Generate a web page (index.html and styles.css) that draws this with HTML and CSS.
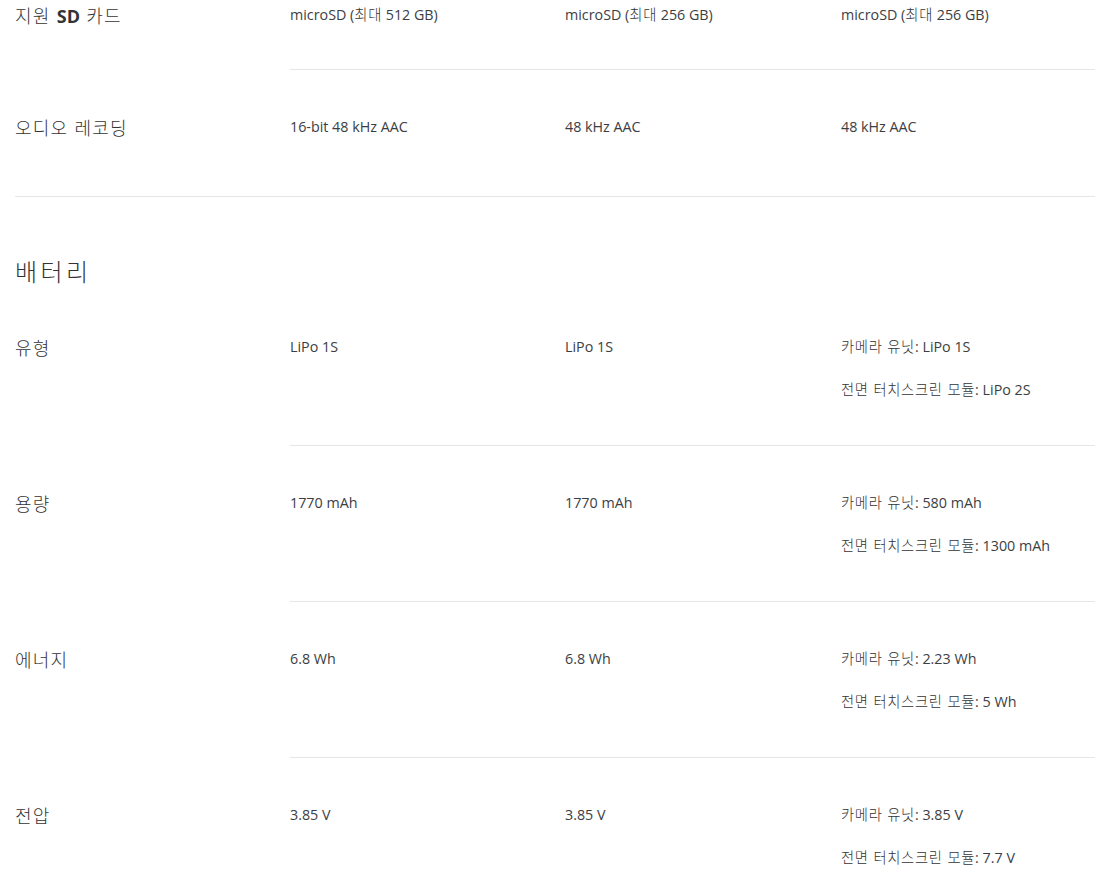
FILE: index.html
```html
<!DOCTYPE html>
<html lang="ko">
<head>
<meta charset="utf-8">
<title>사양</title>
<link rel="stylesheet" href="styles.css">
</head>
<body>
<div class="specs">
  <section class="group group-first">
    <div class="row row-first">
      <div class="label">지원 <b>SD</b> 카드</div>
      <div class="values">
        <div class="cell"><p>microSD (<span class="ko">최대</span> 512 GB)</p></div>
        <div class="cell"><p>microSD (<span class="ko">최대</span> 256 GB)</p></div>
        <div class="cell"><p>microSD (<span class="ko">최대</span> 256 GB)</p></div>
      </div>
    </div>
    <div class="row row-last">
      <div class="label">오디오 레코딩</div>
      <div class="values">
        <div class="cell"><p>16-bit 48 kHz AAC</p></div>
        <div class="cell"><p>48 kHz AAC</p></div>
        <div class="cell"><p>48 kHz AAC</p></div>
      </div>
    </div>
  </section>

  <section class="group">
    <h2 class="group-title">배터리</h2>
    <div class="row">
      <div class="label">유형</div>
      <div class="values">
        <div class="cell"><p>LiPo 1S</p></div>
        <div class="cell"><p>LiPo 1S</p></div>
        <div class="cell"><p><span class="ko">카메라 유닛</span>: LiPo 1S</p><p><span class="ko">전면 터치스크린 모듈</span>: LiPo 2S</p></div>
      </div>
    </div>
    <div class="row">
      <div class="label">용량</div>
      <div class="values">
        <div class="cell"><p>1770 mAh</p></div>
        <div class="cell"><p>1770 mAh</p></div>
        <div class="cell"><p><span class="ko">카메라 유닛</span>: 580 mAh</p><p><span class="ko">전면 터치스크린 모듈</span>: 1300 mAh</p></div>
      </div>
    </div>
    <div class="row">
      <div class="label">에너지</div>
      <div class="values">
        <div class="cell"><p>6.8 Wh</p></div>
        <div class="cell"><p>6.8 Wh</p></div>
        <div class="cell"><p><span class="ko">카메라 유닛</span>: 2.23 Wh</p><p><span class="ko">전면 터치스크린 모듈</span>: 5 Wh</p></div>
      </div>
    </div>
    <div class="row">
      <div class="label">전압</div>
      <div class="values">
        <div class="cell"><p>3.85 V</p></div>
        <div class="cell"><p>3.85 V</p></div>
        <div class="cell"><p><span class="ko">카메라 유닛</span>: 3.85 V</p><p><span class="ko">전면 터치스크린 모듈</span>: 7.7 V</p></div>
      </div>
    </div>
  </section>
</div>
</body>
</html>
```

FILE: styles.css
```css
html, body {
  margin: 0;
  padding: 0;
  background: #ffffff;
}

body {
  font-family: "Open Sans", "Noto Sans CJK KR", sans-serif;
  color: #3b3e43;
  overflow: hidden;
}

.specs {
  width: 1080px;
  margin-left: 15px;
}

.group {
  border-bottom: 1px solid #e6e6e6;
}

.group-title {
  margin: 58px 0 3px;
  font-size: 24px;
  line-height: 32px;
  font-weight: 300;
  letter-spacing: 3.4px;
  color: #333333;
  font-family: "Noto Sans CJK KR", sans-serif;
}

.row {
  display: grid;
  grid-template-columns: 275px 1fr;
}

.label {
  padding-top: 46px;
  font-family: "Noto Sans CJK KR", sans-serif;
  font-size: 18px;
  line-height: 22px;
  height: 22px;
  color: #333333;
  font-weight: 300;
  letter-spacing: 1.2px;
}

.label b {
  font-family: "Open Sans", sans-serif;
  font-weight: 700;
  letter-spacing: 0;
  line-height: 1;
}

.values {
  display: grid;
  grid-template-columns: 275px 276px 1fr;
  padding: 46px 0 44px;
  border-bottom: 1px solid #e6e6e6;
}

.row-first .label,
.row-first .values {
  padding-top: 4px;
}

.row-first .values {
  padding-bottom: 43px;
}

.row-last .values {
  border-bottom: none;
  padding-bottom: 58px;
}

.group .row:last-child .values {
  border-bottom: none;
}

.cell {
  display: flex;
  flex-direction: column;
  gap: 21px;
}

.cell p {
  margin: 0;
  font-size: 14.3px;
  line-height: 22px;
  height: 22px;
}

.ko {
  font-family: "Noto Sans CJK KR", sans-serif;
  font-weight: 300;
  letter-spacing: 0.7px;
  line-height: 1;
  color: #333333;
}
```
